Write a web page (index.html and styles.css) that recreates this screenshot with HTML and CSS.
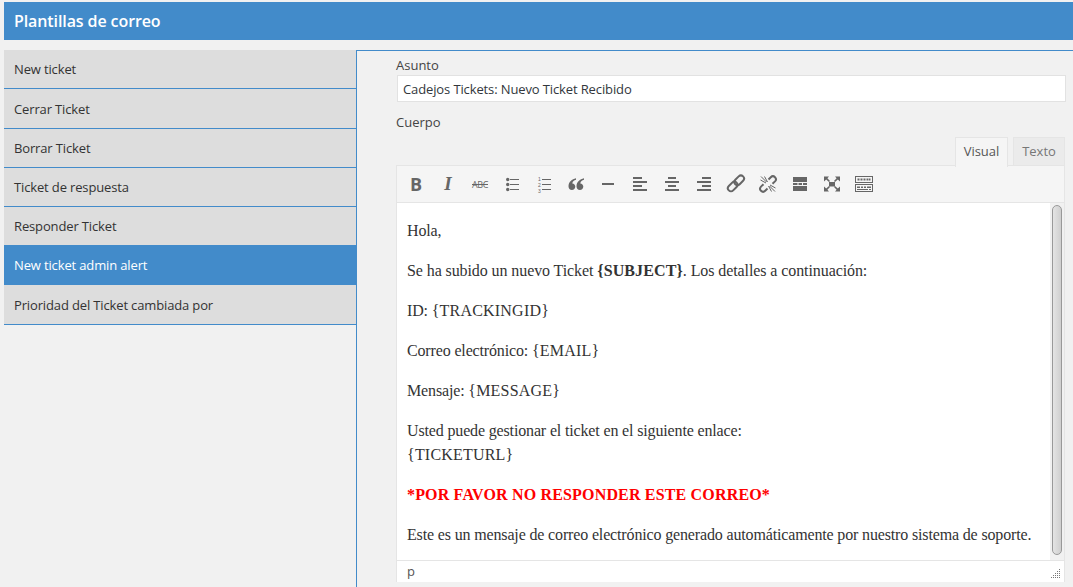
FILE: index.html
```html
<!DOCTYPE html>
<html lang="es">
<head>
  <meta charset="UTF-8">
  <meta name="viewport" content="width=device-width, initial-scale=1.0">
  <title>Plantillas de correo</title>
  <link rel="stylesheet" href="styles.css">
</head>
<body>
  <h1 class="page-title">Plantillas de correo</h1>

  <div class="columns">
    <ul class="template-list">
      <li class="template-item">New ticket</li>
      <li class="template-item">Cerrar Ticket</li>
      <li class="template-item">Borrar Ticket</li>
      <li class="template-item">Ticket de respuesta</li>
      <li class="template-item">Responder Ticket</li>
      <li class="template-item active">New ticket admin alert</li>
      <li class="template-item">Prioridad del Ticket cambiada por</li>
    </ul>

    <div class="template-form">
      <label class="field-label" for="subject">Asunto</label>
      <input class="subject-input" id="subject" type="text" value="Cadejos Tickets: Nuevo Ticket Recibido">

      <div class="field-label body-label">Cuerpo</div>

      <div class="tabs">
        <div class="tab current">Visual</div>
        <div class="tab">Texto</div>
      </div>

      <div class="editor">
        <div class="toolbar">
          <span class="tool"><b class="glyph-b">B</b></span>
          <span class="tool"><i class="glyph-i">I</i></span>
          <span class="tool"><span class="glyph-abc">ABC</span></span>
          <span class="tool">
            <svg width="20" height="20" viewBox="0 0 20 20"><circle cx="5.700" cy="5.500" r="1.700"/><circle cx="5.700" cy="10.500" r="1.700"/><circle cx="5.700" cy="15.500" r="1.700"/><path d="M8 5h9v1H8zM8 10h9v1H8zM8 15h9v1H8z"/></svg>
          </span>
          <span class="tool">
            <span class="num-col">1<br>2<br>3</span>
            <svg width="12" height="20" viewBox="0 0 12 20"><path d="M0 5h9v1H0zM0 10h9v1H0zM0 15h9v1H0z"/></svg>
          </span>
          <span class="tool">
            <svg width="20" height="20" viewBox="0 0 20 20"><path d="M10 4.200C6 5 2.500 8 2.500 12.200c0 2.300 1.400 3.800 3.400 3.800s3.400-1.500 3.400-3.400-1.300-3.200-3-3.200c.2-1.800 1.900-3 3.700-3.600z"/><path d="M18 4.200c-4 .8-7.500 3.800-7.500 8 0 2.300 1.400 3.800 3.400 3.800s3.400-1.500 3.400-3.400-1.300-3.200-3-3.200c.2-1.800 1.900-3 3.700-3.600z"/></svg>
          </span>
          <span class="tool">
            <svg width="20" height="20" viewBox="0 0 20 20"><path d="M4 9h12v2H4z"/></svg>
          </span>
          <span class="tool">
            <svg width="20" height="20" viewBox="0 0 20 20"><path d="M12 5V3H3v2h9zm5 4V7H3v2h14zm-5 4v-2H3v2h9zm5 4v-2H3v2h14z"/></svg>
          </span>
          <span class="tool">
            <svg width="20" height="20" viewBox="0 0 20 20"><path d="M14 5V3H6v2h8zm3 4V7H3v2h14zm-3 4v-2H6v2h8zm3 4v-2H3v2h14z"/></svg>
          </span>
          <span class="tool">
            <svg width="20" height="20" viewBox="0 0 20 20"><path d="M17 5V3H8v2h9zm0 4V7H3v2h14zm0 4v-2H8v2h9zm0 4v-2H3v2h14z"/></svg>
          </span>
          <span class="tool">
            <svg width="20" height="20" viewBox="0 0 20 20"><g class="stroke"><rect x="1.200" y="9.400" width="11" height="6.200" rx="3.100" transform="rotate(-45 6.700 12.500)"/><rect x="7.700" y="3.200" width="11" height="6.200" rx="3.100" transform="rotate(-45 13.200 6.300)"/></g></svg>
          </span>
          <span class="tool">
            <svg width="20" height="20" viewBox="0 0 20 20"><g class="stroke"><path d="M10.500 5.500l2.300-2.300a3 3 0 0 1 4.200 0 3 3 0 0 1 0 4.200L14.500 9.800"/><path d="M9.500 14.500l-2.300 2.300a3 3 0 0 1-4.200 0 3 3 0 0 1 0-4.200l2.500-2.400"/></g><g class="thin"><path d="M3 2.500l5.500 5.500M2.500 6l5.500 3M6.500 2.500l3 5.500M11.500 12l5.500 5.500M12 11l5.500 3M10.500 12l3 5.500"/></g></svg>
          </span>
          <span class="tool">
            <svg width="20" height="20" viewBox="0 0 20 20"><path d="M3 3h14v5H3zM3 9h4.500v2H3zM8.500 9H12v2H8.500zM13 9h4v2h-4zM3 12h14v5H3z"/></svg>
          </span>
          <span class="tool">
            <svg width="20" height="20" viewBox="0 0 20 20"><path d="M7 8h6v4.500H7z"/><path d="M2 2.500h5L5.400 4.200 8 7 7 8 4.200 5.400 2 7.500zM18 2.500v5l-2.200-2.100L13 8l-1-1 2.600-2.800L13 2.500zM2 17.500v-5l2.200 2.100L7 12l1 1-2.600 2.800L7 17.500zM18 17.500h-5l1.600-1.700L12 13l1-1 2.800 2.600 2.200-2.100z"/></svg>
          </span>
          <span class="tool">
            <svg width="20" height="20" viewBox="0 0 20 20"><path fill-rule="evenodd" d="M1 2h18v7H1zM2 3v5h16V3zM1 10h18v8H1zM2 11v6h16v-6z"/><path d="M3.500 4.500h2v2h-2zM6.500 4.500h2v2h-2zM9.500 4.500h2v2h-2zM12.500 4.500h2v2h-2zM15 4.500h1.500v2H15zM3 12.500h3v1.500H3zM7 12.500h2v1.500H7zM10 12.500h2v1.500h-2zM13 12.500h4v1.500h-4zM3 15h11v1H3zM15 15h2v1h-2z"/></svg>
          </span>
        </div>

        <div class="editor-body">
          <div class="editor-text">
            <p>Hola,</p>
            <p class="subject-line">Se ha subido un nuevo Ticket <strong>{SUBJECT}</strong>. Los detalles a continuación:</p>
            <p>ID: <span class="placeholder">{TRACKINGID}</span></p>
            <p>Correo electrónico: <span class="placeholder">{EMAIL}</span></p>
            <p>Mensaje: <span class="placeholder">{MESSAGE}</span></p>
            <p>Usted puede gestionar el ticket en el siguiente enlace:<br><span class="placeholder">{TICKETURL}</span></p>
            <p class="warning">*POR FAVOR NO RESPONDER ESTE CORREO*</p>
            <p>Este es un mensaje de correo electrónico generado automáticamente por nuestro sistema de soporte.</p>
          </div>
          <div class="scrollbar"><div class="scroll-thumb"></div></div>
        </div>

        <div class="statusbar">
          <span>p</span>
          <svg class="resize-grip" width="10" height="9" viewBox="0 0 10 9"><path d="M8 0h1v1H8zM6 2h1v1H6zM8 2h1v1H8zM4 4h1v1H4zM6 4h1v1H6zM8 4h1v1H8zM2 6h1v1H2zM4 6h1v1H4zM6 6h1v1H6zM8 6h1v1H8zM0 8h1v1H0zM2 8h1v1H2zM4 8h1v1H4zM6 8h1v1H6zM8 8h1v1H8z"/></svg>
        </div>
      </div>
    </div>
  </div>
</body>
</html>
```

FILE: styles.css
```css
html,
body {
  height: 100%;
}

body {
  margin: 0;
  padding: 2px 0 0 4px;
  box-sizing: border-box;
  overflow: hidden;
  background-color: #f1f1f1;
  font-family: "Open Sans", sans-serif;
  font-size: 13px;
  color: #444;
}

.page-title {
  margin: 0;
  height: 38px;
  padding-left: 10px;
  background-color: #428bca;
  color: #fff;
  font-size: 16px;
  font-weight: 600;
  letter-spacing: -0.1px;
  line-height: 38px;
}

.columns {
  display: flex;
  margin-top: 10px;
  height: 537px;
}

/* left list */
.template-list {
  width: 352px;
  margin: 0;
  padding: 0;
  list-style: none;
  flex-shrink: 0;
}

.template-item {
  height: 38px;
  padding-left: 10px;
  border-bottom: 1px solid #428bca;
  background-color: #dddddd;
  color: #333;
  letter-spacing: -0.14px;
  line-height: 39px;
}

.template-item:nth-child(2),
.template-item:nth-child(7) {
  height: 39px;
  line-height: 41px;
}

.template-item.active {
  background-color: #428bca;
  color: #fff;
}

/* right form */
.template-form {
  flex: 1;
  border-left: 1px solid #428bca;
  border-top: 1px solid #428bca;
  padding: 6px 8px 0 39px;
  box-sizing: border-box;
}

.field-label {
  display: block;
  height: 18px;
  line-height: 17px;
  color: #444;
}

.subject-input {
  display: block;
  width: 100%;
  height: 27px;
  box-sizing: border-box;
  margin: 0 0 0 1px;
  padding: 0 5px;
  border: 1px solid #e2e2e2;
  background-color: #fff;
  color: #32373c;
  font-family: "Open Sans", sans-serif;
  font-size: 13px;
  letter-spacing: -0.12px;
}

.body-label {
  margin-top: 12px;
}

.tabs {
  display: flex;
  justify-content: flex-end;
  gap: 5px;
  margin-top: 5px;
  height: 28px;
}

.tab {
  width: 50px;
  height: 27px;
  border: 1px solid #e5e5e5;
  border-bottom: 0;
  background-color: #ebebeb;
  color: #777;
  text-align: center;
  line-height: 26px;
}

.tab.current {
  width: 51px;
  height: 29px;
  position: relative;
  z-index: 1;
  background-color: #f5f5f5;
  color: #555;
}

.editor {
  border: 1px solid #e5e5e5;
  border-bottom: 0;
  background-color: #fff;
}

.toolbar {
  display: flex;
  align-items: center;
  gap: 2px;
  height: 36px;
  padding-left: 4px;
  border-bottom: 1px solid #e5e5e5;
  background-color: #f5f5f5;
}

.tool {
  display: flex;
  align-items: center;
  justify-content: center;
  width: 30px;
  height: 30px;
  color: #666;
}

.tool svg {
  fill: #666;
}

.stroke {
  fill: none;
  stroke: #666;
  stroke-width: 2;
}

.thin {
  fill: none;
  stroke: #666;
  stroke-width: 1;
}

.num-col {
  display: block;
  width: 8px;
  height: 20px;
  padding: 2px 0 0 4px;
  box-sizing: border-box;
  font-family: "Liberation Sans", sans-serif;
  font-size: 5px;
  line-height: 6px;
}

.glyph-b {
  font-size: 18px;
  font-weight: 700;
}

.glyph-i {
  font-family: "Liberation Serif", serif;
  font-size: 19px;
  font-weight: 700;
}

.glyph-abc {
  font-size: 9px;
  letter-spacing: -0.4px;
  text-decoration: line-through;
}

.editor-body {
  display: flex;
  height: 357px;
  border-bottom: 1px solid #e5e5e5;
  overflow: hidden;
}

.editor-text {
  flex: 1;
  min-width: 0;
  padding: 16px 0 0 10px;
  font-family: "Liberation Serif", serif;
  font-size: 16px;
  letter-spacing: -0.15px;
  line-height: 24px;
  color: #333;
}

.editor-text p {
  margin: 0 0 16px;
}

.editor-text .subject-line {
  letter-spacing: -0.09px;
}

.editor-text strong {
  letter-spacing: 0.1px;
}

.placeholder {
  letter-spacing: 0.2px;
}

.editor-text .warning {
  color: #ff0000;
  font-weight: 700;
  letter-spacing: 0.17px;
}

.scrollbar {
  width: 14px;
  padding: 2px 2px 0;
  box-sizing: border-box;
  flex-shrink: 0;
  background-color: #f1f1f1;
}

.scroll-thumb {
  height: 350px;
  border: 1px solid #999;
  border-radius: 6px;
  box-sizing: border-box;
  background: linear-gradient(to right, #e4e4e4, #cfcfcf);
}

.statusbar {
  display: flex;
  align-items: center;
  justify-content: space-between;
  height: 21px;
  padding: 0 3px 2px 10px;
  box-sizing: border-box;
  background-color: #fff;
  color: #555;
  font-size: 13px;
}

.resize-grip {
  fill: #777;
  margin-top: 6px;
}
```
